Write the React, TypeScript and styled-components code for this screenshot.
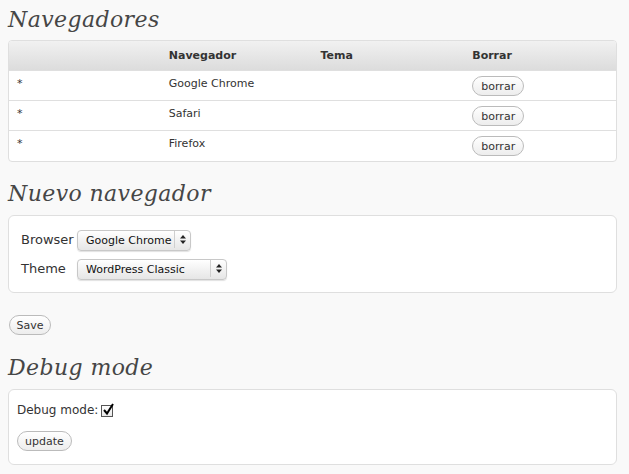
import React from "react";
import styled, { createGlobalStyle } from "styled-components";

const Global = createGlobalStyle`
  html, body { margin: 0; padding: 0; background: #f9f9f9; }
  body { font-family: "DejaVu Sans", Verdana, sans-serif; color: #333; }
`;

const Page = styled.div`
  padding: 0 12px 0 8px;
  width: 609px;
`;

const Heading = styled.h2<{ $top: number; $bottom: number }>`
  font-family: "DejaVu Serif", Georgia, serif;
  font-style: italic;
  font-weight: normal;
  font-size: 22px;
  letter-spacing: 0.4px;
  line-height: 30px;
  color: #464646;
  margin: ${(p) => p.$top}px 0 ${(p) => p.$bottom}px 0;
`;

const Table = styled.table`
  width: 609px;
  border-collapse: separate;
  border-spacing: 0;
  table-layout: fixed;
  background: #fff;
  border: 1px solid #dfdfdf;
  border-radius: 4px;
  overflow: hidden;
  font-size: 11px;
`;

const Th = styled.th`
  text-align: left;
  font-weight: bold;
  height: 29px;
  padding: 0 8px;
  color: #333;
  background: linear-gradient(#f1f1f1, #dcdcdc);
  border-bottom: 1px solid #dfdfdf;
`;

const Td = styled.td<{ $last?: boolean }>`
  vertical-align: top;
  height: 30px;
  padding: 6px 8px 0 8px;
  box-sizing: border-box;
  border-bottom: ${(p) => (p.$last ? "none" : "1px solid #dfdfdf")};
  color: #333;
`;

const BtnCell = styled(Td)`
  padding-top: 5px;
`;

const Pill = styled.button<{ $w: number }>`
  width: ${(p) => p.$w}px;
  height: 20px;
  box-sizing: border-box;
  border: 1px solid #bbb;
  border-radius: 11px;
  background: linear-gradient(#fff, #ededed);
  font-family: "DejaVu Sans", Verdana, sans-serif;
  font-size: 11px;
  color: #333;
  padding: 0;
  cursor: pointer;
  display: block;
`;

const Box = styled.div<{ $pad: string }>`
  background: #fff;
  border: 1px solid #dfdfdf;
  border-radius: 6px;
  padding: ${(p) => p.$pad};
  box-sizing: border-box;
  width: 609px;
`;

const FormGrid = styled.div`
  display: grid;
  grid-template-columns: 56px auto;
  row-gap: 8px;
  align-items: center;
  justify-items: start;
`;

const Label = styled.span`
  font-size: 13px;
  color: #333;
`;

const SelectWrap = styled.span<{ $w: number }>`
  position: relative;
  display: block;
  width: ${(p) => p.$w}px;
  height: 21px;
`;

const Select = styled.select`
  appearance: none;
  -webkit-appearance: none;
  width: 100%;
  height: 100%;
  box-sizing: border-box;
  border: 1px solid #c8c8c8;
  border-radius: 4px;
  background: linear-gradient(#ffffff, #f2f2f2 50%, #e6e6e6);
  box-shadow: 0 1px 1px rgba(0, 0, 0, 0.12);
  padding: 0 0 0 8px;
  font-family: "DejaVu Sans", Verdana, sans-serif;
  font-size: 11px;
  color: #111;
`;

const Arrows = styled.span`
  position: absolute;
  right: 0;
  top: 2px;
  bottom: 2px;
  width: 16px;
  border-left: 1px solid #cfcfcf;
  display: flex;
  align-items: center;
  justify-content: center;
  pointer-events: none;
`;

const SaveRow = styled.div`
  margin-top: 22px;
  padding-left: 1px;
  display: flex;
`;

const DebugLine = styled.div`
  display: flex;
  align-items: center;
  gap: 3px;
  font-size: 12px;
  height: 16px;
  margin-bottom: 13px;
`;

const Check = styled.span`
  display: inline-flex;
  width: 12px;
  height: 12px;
  box-sizing: border-box;
  border: 1px solid #555;
  background: linear-gradient(#fff, #e8e8e8);
  position: relative;
  margin-top: 1px;
`;

const UpdateWrap = styled.div`
  display: flex;
`;

const ArrowIcon = () => (
  <svg width="6" height="9" viewBox="0 0 6 9">
    <path d="M3 0 L6 3.5 H0 Z" fill="#222" />
    <path d="M3 9 L6 5.5 H0 Z" fill="#222" />
  </svg>
);

const rows = ["Google Chrome", "Safari", "Firefox"];

export default function App() {
  return (
    <>
      <Global />
      <Page>
        <Heading $top={5} $bottom={5}>Navegadores</Heading>
        <Table>
          <thead>
            <tr>
              <Th></Th>
              <Th>Navegador</Th>
              <Th>Tema</Th>
              <Th>Borrar</Th>
            </tr>
          </thead>
          <tbody>
            {rows.map((r, i) => {
              const last = i === rows.length - 1;
              return (
                <tr key={r}>
                  <Td $last={last}>*</Td>
                  <Td $last={last}>{r}</Td>
                  <Td $last={last}></Td>
                  <BtnCell $last={last}>
                    <Pill $w={52}>borrar</Pill>
                  </BtnCell>
                </tr>
              );
            })}
          </tbody>
        </Table>

        <Heading $top={17} $bottom={6}>Nuevo navegador</Heading>
        <Box $pad="13px 12px 13px 12px">
          <FormGrid>
            <Label>Browser</Label>
            <SelectWrap $w={114}>
              <Select defaultValue="Google Chrome">
                <option>Google Chrome</option>
                <option>Safari</option>
                <option>Firefox</option>
              </Select>
              <Arrows><ArrowIcon /></Arrows>
            </SelectWrap>
            <Label>Theme</Label>
            <SelectWrap $w={150}>
              <Select defaultValue="WordPress Classic">
                <option>WordPress Classic</option>
                <option>WordPress Fresh</option>
              </Select>
              <Arrows><ArrowIcon /></Arrows>
            </SelectWrap>
          </FormGrid>
        </Box>
        <SaveRow>
          <Pill $w={42}>Save</Pill>
        </SaveRow>

        <Heading $top={18} $bottom={6}>Debug mode</Heading>
        <Box $pad="12px 8px 13px 8px">
          <DebugLine>
            <span>Debug mode:</span>
            <Check>
              <svg width="14" height="14" viewBox="0 0 14 14" style={{ position: "absolute", left: 0, top: -3 }}>
                <path d="M2 7 L5 10.5 L11 1" stroke="#000" strokeWidth="2" fill="none" />
              </svg>
            </Check>
          </DebugLine>
          <UpdateWrap>
            <Pill $w={55}>update</Pill>
          </UpdateWrap>
        </Box>
      </Page>
    </>
  );
}
